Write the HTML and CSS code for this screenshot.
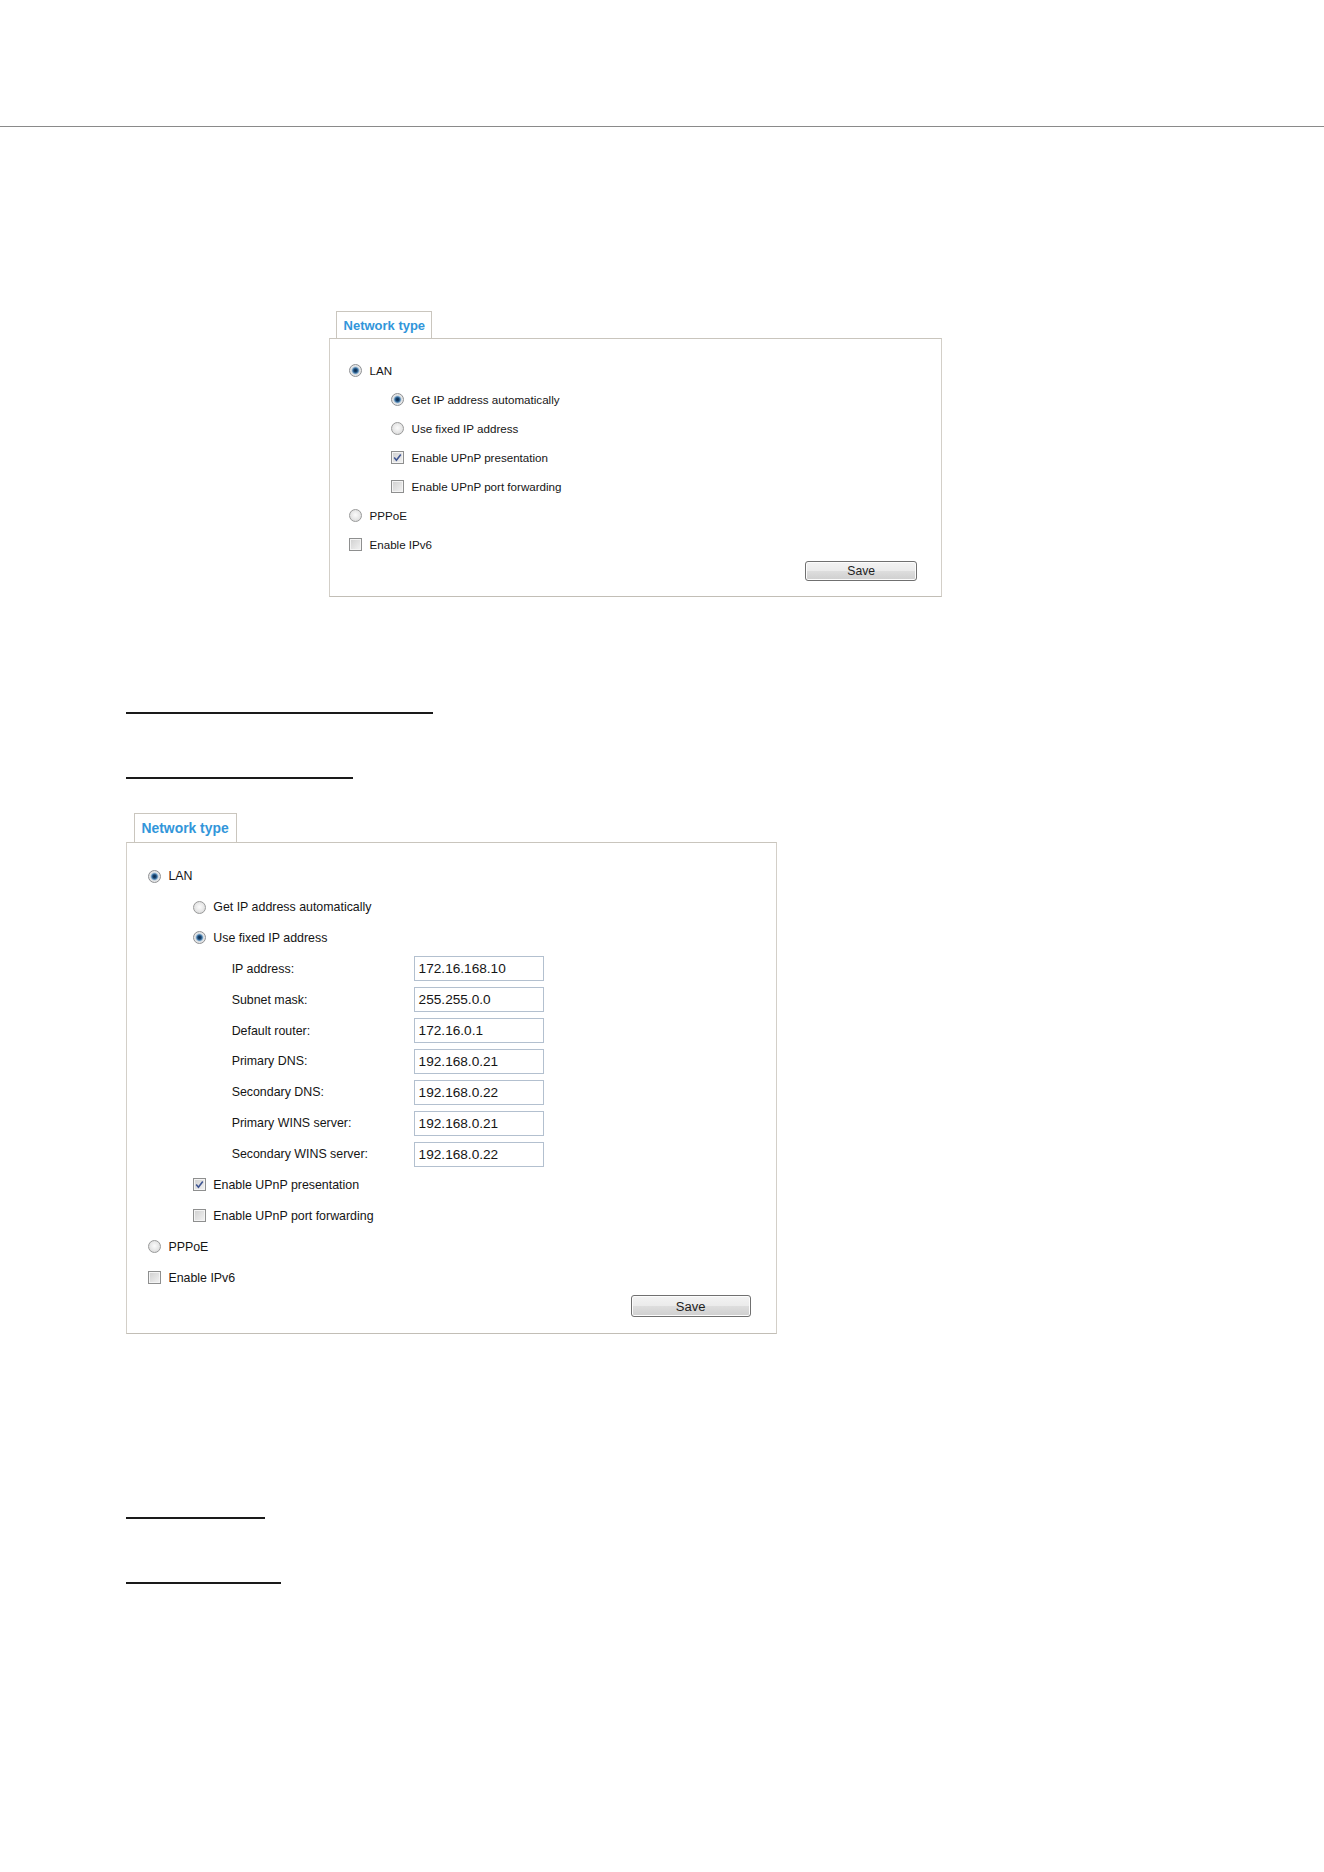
FILE: index.html
```html
<!DOCTYPE html>
<html>
<head>
	<meta charset="utf-8">
	<title>Network type</title>
	<link rel="stylesheet" href="styles.css">
</head>
<body>
	<div class="page-rule"></div>

	<div class="content">
		<!-- 默认：自动获取IP -->
		<div class="net-panel net-panel--auto">
			<div class="tab"><span>Network type</span></div>
			<div class="panel-body">
				<div class="row"><span class="radio on"></span>LAN</div>
				<div class="sub">
					<div class="row"><span class="radio on"></span>Get IP address automatically</div>
					<div class="row"><span class="radio"></span>Use fixed IP address</div>
					<div class="row"><span class="check on"><svg viewBox="0 0 11 11"><path d="M2.2 5.6 L4.4 8.2 L8.8 2.4"/></svg></span>Enable UPnP presentation</div>
					<div class="row"><span class="check"></span>Enable UPnP port forwarding</div>
				</div>
				<div class="row"><span class="radio"></span>PPPoE</div>
				<div class="row"><span class="check"></span>Enable IPv6</div>
				<div class="actions"><button class="btn">Save</button></div>
			</div>
		</div>

		<div class="blank-link w1"></div>
		<div class="blank-link w2 gap"></div>

		<!-- 固定IP -->
		<div class="net-panel net-panel--fixed">
			<div class="tab"><span>Network type</span></div>
			<div class="panel-body">
				<div class="row"><span class="radio on"></span>LAN</div>
				<div class="sub">
					<div class="row"><span class="radio"></span>Get IP address automatically</div>
					<div class="row"><span class="radio on"></span>Use fixed IP address</div>
					<div class="fields">
						<div class="field"><label>IP address:</label><span class="text-box">172.16.168.10</span></div>
						<div class="field"><label>Subnet mask:</label><span class="text-box">255.255.0.0</span></div>
						<div class="field"><label>Default router:</label><span class="text-box">172.16.0.1</span></div>
						<div class="field"><label>Primary DNS:</label><span class="text-box">192.168.0.21</span></div>
						<div class="field"><label>Secondary DNS:</label><span class="text-box">192.168.0.22</span></div>
						<div class="field"><label>Primary WINS server:</label><span class="text-box">192.168.0.21</span></div>
						<div class="field"><label>Secondary WINS server:</label><span class="text-box">192.168.0.22</span></div>
					</div>
					<div class="row"><span class="check on"><svg viewBox="0 0 11 11"><path d="M2.2 5.6 L4.4 8.2 L8.8 2.4"/></svg></span>Enable UPnP presentation</div>
					<div class="row"><span class="check"></span>Enable UPnP port forwarding</div>
				</div>
				<div class="row"><span class="radio"></span>PPPoE</div>
				<div class="row"><span class="check"></span>Enable IPv6</div>
				<div class="actions"><button class="btn">Save</button></div>
			</div>
		</div>

		<div class="blank-link w3 far"></div>
		<div class="blank-link w4 gap"></div>
	</div>
</body>
</html>
```

FILE: styles.css
```css
/*先清掉默认边距*/
body,div{margin: 0;padding: 0;}
body{background: #fff;color: #151515;font-family: "Liberation Sans", Arial, sans-serif;}

.page-rule{margin-top: 126px;height: 1px;background: #8a8a8a;}
.content{padding-left: 126px;}

/*空的链接下划线*/
.blank-link{height: 2px;background: #1a1a1a;margin-top: 115px;}
.blank-link.gap{margin-top: 63px;}
.blank-link.far{margin-top: 183px;}
.w1{width: 307px;}
.w2{width: 227px;}
.w3{width: 139px;}
.w4{width: 155px;}

/*面板，尺寸都用em，两个面板只改字号*/
.net-panel--auto{font-size: 11.6px;width: 613px;margin: 184px 0 0 203px;}
.net-panel--fixed{font-size: 12.4px;width: 651px;margin-top: 34px;}

.tab{
	box-sizing: border-box;
	width: 8.3em;
	height: 2.33em;
	margin-left: 0.62em;
	padding-left: 0.55em;
	border: 1px solid #cac6be;
	border-bottom: none;
	background: #fff;
	display: flex;
	align-items: center;
}
.tab span{font-size: 1.12em;font-weight: bold;color: #3296da;}

.panel-body{
	border: 1px solid #d3cfc8;
	border-top-color: #c9c5bd;
	border-bottom-color: #c2beb6;
	padding: 1.45em 2.05em 1.25em 1.67em;
}

.row{display: flex;align-items: center;height: 2.49em;white-space: nowrap;}
.net-panel--auto .row{height: 2.5em;}
.sub{padding-left: 3.62em;}
.fields{padding-left: 3.15em;}

/*单选框*/
.radio{
	box-sizing: border-box;
	width: 13px;
	height: 13px;
	margin-right: 0.62em;
	border: 1px solid #999a9a;
	border-radius: 50%;
	background: radial-gradient(circle at 50% 45%, #fbfbfb 0, #e6e6e6 55%, #cfcfcf 100%);
	flex: none;
}
.radio.on{
	border-color: #8f9194;
	background: radial-gradient(circle, #0d2d4f 0, #17426d 1.6px, #4f86b5 2.8px, #c3d1dd 3.8px, #e9e9e9 4.6px, #d2d2d2 100%);
}

/*复选框*/
.check{
	box-sizing: border-box;
	width: 13px;
	height: 13px;
	margin-right: 0.62em;
	border: 1px solid #8e8f8f;
	box-shadow: inset 0 0 0 1px #f4f4f4;
	background: linear-gradient(135deg, #cfcfcf, #f3f3f3);
	flex: none;
	display: flex;
}
.check svg{width: 11px;height: 11px;}
.check svg path{fill: none;stroke: #3f5592;stroke-width: 1.6;}

.field{display: flex;align-items: center;height: 2.49em;}
.field label{width: 14.68em;flex: none;white-space: nowrap;}
.text-box{
	box-sizing: border-box;
	font-size: 1.1em;
	width: 9.53em;
	height: 1.83em;
	padding-left: 0.29em;
	border: 1px solid #b3c0cf;
	background: #fff;
	display: flex;
	align-items: center;
}

.actions{display: flex;justify-content: flex-end;margin-top: 0.2em;}
/*按钮字号大一点，宽高按按钮自己的em算*/
.btn{
	box-sizing: border-box;
	width: 9.2em;
	height: 1.66em;
	padding: 0;
	font-family: inherit;
	font-size: 1.05em;
	color: #1e1e1e;
	border: 1px solid #707070;
	border-radius: 3px;
	background: linear-gradient(#f3f3f3 0, #ebebeb 48%, #dddddd 52%, #cfcfcf 100%);
	box-shadow: inset 0 0 0 1px #fcfcfc;
}
```
